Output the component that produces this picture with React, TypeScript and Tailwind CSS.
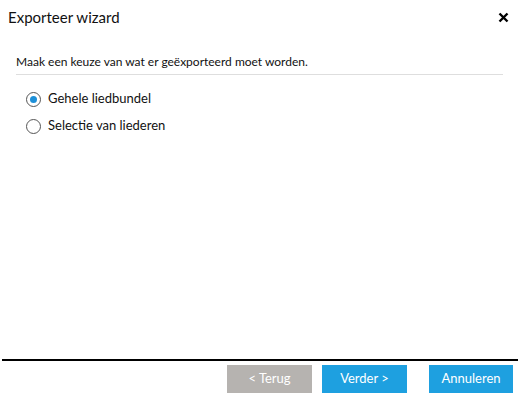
import { useState } from "react";

export default function App() {
  const [choice, setChoice] = useState("all");

  const options = [
    { id: "all", label: "Gehele liedbundel" },
    { id: "select", label: "Selectie van liederen" },
  ];

  return (
    <div
      className="w-[520px] h-[400px] bg-white flex flex-col text-[#111]"
      style={{ fontFamily: 'Lato, "Noto Sans", sans-serif' }}
    >
      {/* Header */}
      <div className="h-[34px] flex items-center justify-between pl-2 pr-[9px]">
        <span className="text-[15px] leading-none">Exporteer wizard</span>
        <button className="w-4 h-4 flex items-center justify-center">
          <svg width="11" height="11" viewBox="0 0 11 11">
            <path d="M1.5 1.5 L9.5 9.5 M9.5 1.5 L1.5 9.5" stroke="#000" strokeWidth="2.4" />
          </svg>
        </button>
      </div>

      {/* Body */}
      <div className="flex-1 px-4 pt-[19px]">
        <p className="text-[12px] leading-[18px] pb-[3px] border-b border-[#dedede] mr-[1px]">
          Maak een keuze van wat er geëxporteerd moet worden.
        </p>
        <div className="flex flex-col gap-[9px] pt-[15px] pl-[10px]">
          {options.map((o) => (
            <label key={o.id} className="flex items-center gap-[7px] h-[18px] cursor-pointer">
              <span
                className="w-[15px] h-[15px] rounded-full border border-[#555] flex items-center justify-center bg-white"
                onClick={() => setChoice(o.id)}
              >
                {choice === o.id && <span className="w-[7px] h-[7px] rounded-full bg-[#1e90d8]" />}
              </span>
              <span className="text-[13px]">{o.label}</span>
            </label>
          ))}
        </div>
      </div>

      {/* Footer */}
      <div className="mx-[2px] border-t-2 border-black h-[41px] flex items-start justify-end pt-[4px] pr-[5px]">
        <button className="w-[85px] h-[28px] bg-[#b6b3b0] text-white text-[13px] mr-[10px]">
          &lt; Terug
        </button>
        <button className="w-[85px] h-[28px] bg-[#1ea0e0] text-white text-[13px] mr-[22px]">
          Verder &gt;
        </button>
        <button className="w-[84px] h-[28px] bg-[#1ea0e0] text-white text-[13px]">
          Annuleren
        </button>
      </div>
    </div>
  );
}
